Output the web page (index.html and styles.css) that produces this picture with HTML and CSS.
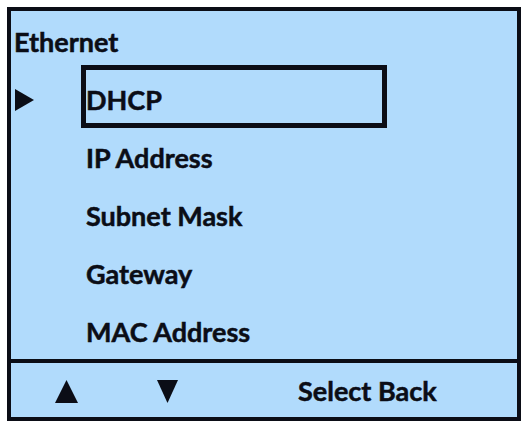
FILE: index.html
```html
<!DOCTYPE html>
<html>
<head>
<meta charset="utf-8">
<link rel="stylesheet" href="styles.css">
</head>
<body>
<div class="screen">
  <div class="main">
    <div class="title">Ethernet</div>
    <div class="menu">
      <div class="item">
        <div class="pointer"><svg width="19" height="22" viewBox="0 0 19 22"><polygon points="0,0 19,11 0,22" fill="#0b0d16"/></svg></div>
        <div class="label selected">DHCP</div>
      </div>
      <div class="item">
        <div class="pointer"></div>
        <div class="label">IP Address</div>
      </div>
      <div class="item">
        <div class="pointer"></div>
        <div class="label">Subnet Mask</div>
      </div>
      <div class="item">
        <div class="pointer"></div>
        <div class="label">Gateway</div>
      </div>
      <div class="item">
        <div class="pointer"></div>
        <div class="label">MAC Address</div>
      </div>
    </div>
  </div>
  <div class="footer">
    <svg class="up" width="23" height="23" viewBox="0 0 23 23"><polygon points="11.5,0 23,23 0,23" fill="#0b0d16"/></svg>
    <svg class="down" width="21" height="23" viewBox="0 0 21 23"><polygon points="0,0 21,0 10.5,23" fill="#0b0d16"/></svg>
    <div class="softkeys">Select Back</div>
  </div>
</div>
</body>
</html>
```
FILE: styles.css
```css
html, body {
  margin: 0;
  padding: 0;
  background: #ffffff;
}
body {
  font-family: Lato, "Open Sans", sans-serif;
  font-weight: 700;
  color: #0b0d16;
  -webkit-text-stroke: 0.5px #0b0d16;
}
.screen {
  margin: 7px 0 0 7px;
  width: 514px;
  height: 414px;
  box-sizing: border-box;
  border: 4px solid #0b0d16;
  background: #b1dbfc;
  display: flex;
  flex-direction: column;
}
.main {
  height: 348px;
  padding-top: 2px;
  box-sizing: border-box;
}
.title {
  font-size: 27px;
  line-height: 58px;
  height: 58px;
  padding-left: 3px;
}
.menu {
  display: flex;
  flex-direction: column;
}
.item {
  display: flex;
  height: 58px;
}
.pointer {
  width: 70px;
  padding-left: 4px;
  box-sizing: border-box;
  display: flex;
  align-items: center;
}
.label {
  width: 306px;
  height: 63px;
  box-sizing: border-box;
  margin-top: -6px;
  border: 5px solid transparent;
  padding: 5px 0 0 0;
  font-size: 27px;
  line-height: 50px;
}
.label.selected {
  border-color: #0b0d16;
}
.footer {
  flex: 1;
  border-top: 4px solid #0b0d16;
  display: flex;
  align-items: center;
  padding: 2px 0 0 44px;
}
.up {
  display: block;
}
.down {
  display: block;
  margin-left: 79px;
}
.softkeys {
  margin-left: 120px;
  font-size: 27px;
  line-height: 30px;
}
```
